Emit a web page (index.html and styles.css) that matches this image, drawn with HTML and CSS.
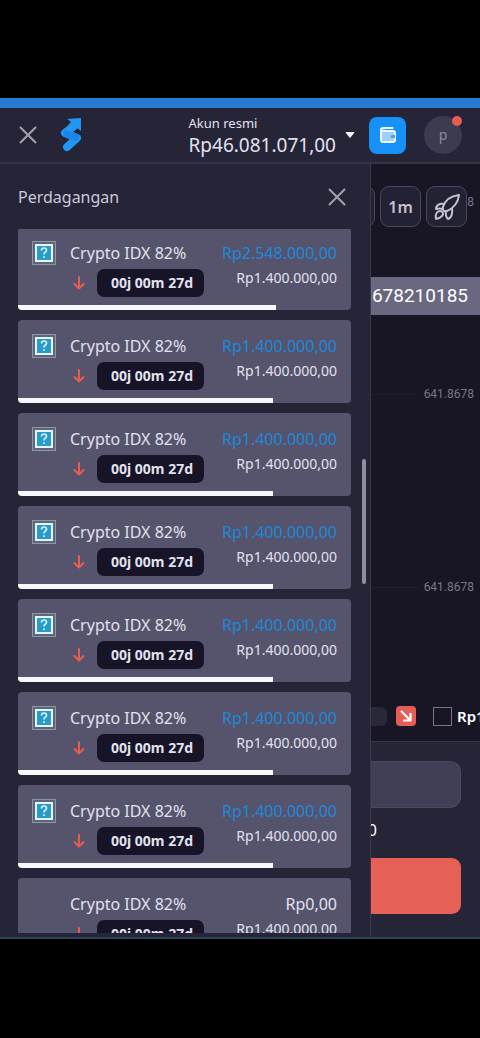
FILE: index.html
```html
<!DOCTYPE html>
<html lang="id">
<head>
<meta charset="utf-8">
<meta name="viewport" content="width=device-width, initial-scale=1">
<title>Perdagangan</title>
<link rel="stylesheet" href="styles.css">
</head>
<body>
<svg class="sprite" aria-hidden="true">
  <symbol id="close" viewBox="0 0 18 18"><path d="M1.500 1.500 16.500 16.500M16.500 1.500 1.500 16.500" fill="none" stroke="currentColor" stroke-width="2" stroke-linecap="round"/></symbol>
  <symbol id="down" viewBox="0 0 12 14"><path d="M6 1v11.500M1.500 8 6 12.500 10.500 8" fill="none" stroke="currentColor" stroke-width="2" stroke-linecap="round" stroke-linejoin="round"/></symbol>
</svg>
<div class="app">
  <header class="header">
    <button class="icon-button" aria-label="Tutup"><svg class="close-icon"><use href="#close"/></svg></button>
    <a class="logo" href="#" aria-label="Beranda">
      <svg viewBox="0 0 22 36">
        <path d="M7 2 21 1v13l-4-3-3 3-6-6 3-3z" fill="#2196f3"/>
        <path d="M14 9 5 16l12 5L7 30" fill="none" stroke="#2196f3" stroke-width="8" stroke-linejoin="round" stroke-linecap="round"/>
        <path d="M3 19 5 13l14 5v5l-4 1z" fill="#1b86e6"/>
      </svg>
    </a>
    <button class="account">
      <span class="account-text"><span class="account-type">Akun resmi</span><span class="account-sum">Rp46.081.071,00</span></span>
      <svg class="caret" viewBox="0 0 10 6"><path d="M1 .5h8L5 5.500z" fill="#f2f2fa" stroke="#f2f2fa" stroke-linejoin="round"/></svg>
    </button>
    <button class="wallet" aria-label="Dompet">
      <svg viewBox="0 0 18 18"><path d="M2 4v10q0 2 2 2h10q2 0 2-2V7q0-2-2-2H4Q2 5 2 3.500T4 2h9.500" fill="#9fd0fb" stroke="#eef7ff" stroke-width="2" stroke-linecap="round" stroke-linejoin="round"/><path d="M16 9h-3a1.500 1.500 0 0 0 0 3h3z" fill="#4aa3f0"/><path d="M3 5h12" stroke="#eef7ff" stroke-width="2"/></svg>
    </button>
    <button class="avatar" aria-label="Profil">p<span class="dot"></span></button>
  </header>
  <div class="content">
    <section class="panel">
      <div class="panel-head"><h1>Perdagangan</h1><button class="icon-button" aria-label="Tutup panel"><svg class="close-icon"><use href="#close"/></svg></button></div>
      <div class="scroll"><ul class="trades" id="trades"></ul></div>
      <div class="thumb"></div>
    </section>
    <main class="side">
      <div class="chart">
        <span class="axis axis-back">641.8678</span>
        <div class="tools">
          <button class="tool" aria-label="Indikator"></button>
          <button class="tool">1m</button>
          <button class="tool" aria-label="Strategi">
            <svg viewBox="0 0 28 28" fill="none" stroke="currentColor" stroke-width="2" stroke-linejoin="round" stroke-linecap="round"><path d="M26 2C18 3 12 7 10 14q-1 5 4 4C21 15 25 10 26 2z"/><path d="M11 11C7 10 3 12 3 16q4-1 7 0M19 16c1 5-1 9-4 10q-3-3-2-8"/><path d="M3 26c-1-5 1-8 4-8s4 3 2 5-3 3-6 3z"/></svg>
          </button>
        </div>
        <div class="price">641.8678210185</div>
        <div class="axis-row first"><span class="axis">641.8678</span></div>
        <div class="axis-row second"><span class="axis">641.8678</span></div>
        <div class="deals">
          <span class="chip"></span>
          <span class="sell"><svg viewBox="0 0 20 20"><path d="M5 5l9 9M14.500 7v7.500H7" fill="none" stroke="#fff" stroke-width="2.200"/></svg></span>
          <label class="deal"><input type="checkbox"><span>Rp1.400.000</span></label>
        </div>
      </div>
      <div class="order">
        <input class="amount" type="text" aria-label="Jumlah">
        <div class="income">Rp2.548.000,00</div>
        <button class="sell-button" aria-label="Turun"></button>
      </div>
    </main>
  </div>
</div>
<script src="app.js"></script>
</body>
</html>
```
FILE: styles.css
```css
* { box-sizing: border-box; }
body {
  margin: 0;
  min-height: 100vh;
  padding: 98px 0 99px;
  display: flex;
  background: #000;
  color: #e2e1ef;
  font: 16px/20px "Noto Sans", "Open Sans", sans-serif;
}
button { border: 0; padding: 0; background: none; color: inherit; font: inherit; }
svg { display: block; }
.sprite { position: absolute; width: 0; height: 0; }
.app {
  flex: 1;
  min-width: 0;
  display: flex;
  flex-direction: column;
  border-top: 10px solid #267ad3;
  border-bottom: 2px solid #28455b;
  background: #262437;
}
.header {
  height: 56px;
  padding: 0 18px;
  display: flex;
  align-items: center;
  border-bottom: 2px solid #343245;
}
.icon-button { width: 20px; height: 20px; display: grid; place-items: center; color: #a3a1b1; }
.close-icon { width: 18px; height: 18px; }
.logo { margin-left: 22px; }
.logo svg { width: 22px; height: 36px; }
.account { margin-left: auto; display: flex; align-items: center; gap: 9px; text-align: left; }
.account-text { display: grid; }
.account-type { font-size: 13px; line-height: 20px; }
.account-sum { font-size: 19px; line-height: 24px; }
.caret { width: 10px; height: 6px; }
.wallet {
  width: 37px;
  height: 37px;
  margin-left: 14px;
  display: grid;
  place-items: center;
  border-radius: 8px;
  background: #1591f7;
}
.wallet svg { width: 18px; height: 18px; }
.avatar {
  position: relative;
  width: 38px;
  height: 38px;
  margin-left: 18px;
  border-radius: 50%;
  background: #3c3b4f;
  color: #8d8b9d;
  font-size: 14px;
}
.dot { position: absolute; top: 0; right: 0; width: 10px; height: 10px; border-radius: 50%; background: #e75d54; }
.content { flex: 1; min-height: 0; display: grid; grid-template-columns: minmax(0, 1fr) 109px; }
.panel { position: relative; display: flex; flex-direction: column; border-right: 1px solid #3a384b; }
.panel-head {
  height: 65px;
  padding: 0 23px 0 18px;
  display: flex;
  align-items: center;
  justify-content: space-between;
}
h1 { margin: 0; font-size: 16px; font-weight: 400; color: #cbc9d9; }
.scroll { flex: 1 1 0; height: 0; margin: 0 19px 4px 18px; overflow: hidden; }
.trades { list-style: none; margin: -2px 0 0; padding: 0; display: grid; gap: 10px; }
.thumb { position: absolute; right: 4px; top: 295px; width: 4px; height: 125px; border-radius: 2px; background: #8e8f9f; }
.trade {
  height: 83px;
  padding: 16px 14px 0;
  display: grid;
  grid-template: 20px 28px 1fr / 24px 14px auto 1fr;
  row-gap: 6px;
  overflow: hidden;
  border-radius: 4px;
  background: #55546c;
}
.asset-icon { width: 24px; height: 24px; margin-top: -2px; }
.asset { grid-column: 3; white-space: nowrap; }
.win { grid-column: 4; text-align: right; color: #1e88d8; }
.win.none { color: inherit; }
.time-row { grid-column: 3; display: flex; align-items: center; gap: 12px; padding-left: 3px; }
.arrow { width: 12px; height: 14px; color: #e75d54; }
.timer {
  width: 107px;
  padding: 4px 9px 4px 14px;
  border-radius: 7px;
  background: #161426;
  font-size: 14px;
  font-weight: 700;
  white-space: nowrap;
}
.stake { grid-column: 4; text-align: right; font-size: 14px; line-height: 18px; }
.progress { grid-row: 3; grid-column: 1 / -1; align-self: end; height: 5px; margin: 0 -14px; }
.bar { height: 100%; background: #f8f8fc; }
.side { min-width: 0; display: flex; flex-direction: column; overflow: hidden; background: #181624; }
.chart { flex: 1; position: relative; overflow: hidden; }
.tools { position: relative; height: 41px; margin: 22px 13px 0 0; display: flex; justify-content: flex-end; gap: 5px; background: #181624; }
.tool {
  flex: 0 0 41px;
  display: grid;
  place-items: center;
  border: 1px solid #49475b;
  border-radius: 9px;
  background: #232134;
  color: #c4c2d1;
  font-weight: 600;
}
.tool svg { width: 28px; height: 28px; }
.axis { color: #77768a; font: 12px/16px Roboto, sans-serif; }
.axis-back { position: absolute; top: 30px; right: 6px; }
.price {
  height: 38px;
  margin-top: 50px;
  padding-right: 12px;
  display: flex;
  align-items: center;
  justify-content: flex-end;
  background: #696880;
  color: #fff;
  font: 19px/38px Roboto, sans-serif;
}
.axis-row { display: flex; align-items: center; gap: 5px; height: 16px; padding-right: 6px; }
.axis-row::before { content: ""; flex: 1; height: 1px; background: #201e2c; }
.first { margin-top: 71px; }
.second { margin-top: 177px; }
.deals { height: 20px; margin-top: 111px; display: flex; align-items: center; font-weight: 600; font-size: 15px; }
.chip { flex: 0 0 16px; height: 19px; border-radius: 0 6px 6px 0; background: #29273a; }
.sell { flex: 0 0 20px; height: 20px; margin: 0 17px 0 9px; border-radius: 4px; background: #e75d54; }
.deal { display: flex; align-items: center; gap: 5px; color: #fff; }
.deal input { appearance: none; flex: 0 0 19px; height: 19px; margin: 0; border: 1px solid #77768a; }
.order {
  height: 196px;
  padding: 19px 19px 0 0;
  display: flex;
  flex-direction: column;
  border-top: 1px solid #343245;
  background: #262437;
}
.amount { width: 100%; height: 47px; border: 1px solid #494a60; border-left: 0; border-radius: 0 11px 11px 0; background: #3f3f56; color: #fff; }
.income { width: 6px; height: 20px; margin: 12px 0 18px; align-self: flex-start; display: flex; justify-content: flex-end; overflow: hidden; color: #fff; }
.sell-button { height: 56px; border-radius: 0 9px 9px 0; background: #e66055; }
```
FILE: app.js
```js
const trades = [
  { win: "Rp2.548.000,00", progress: 77.5, icon: true },
  ...Array.from({ length: 6 }, () => ({ win: "Rp1.400.000,00", progress: 76.7, icon: true })),
  { win: "Rp0,00", progress: 76.7, icon: false }
];

const assetIcon = `<svg class="asset-icon" viewBox="0 0 24 24">
  <rect x=".5" y=".5" width="23" height="23" fill="#626579" stroke="#8798a9"/>
  <rect x="4" y="4" width="16" height="16" fill="#299bc9" stroke="#e5f5fc" stroke-width="2"/>
  <path d="M9.500 9.500q0-2.500 2.500-2.500t2.500 2.200q0 1.300-1.300 2.100T12 13.500M12 15.300v1.700" fill="none" stroke="#d7f2fc" stroke-width="1.700"/>
</svg>`;

document.getElementById("trades").innerHTML = trades.map(t => `
  <li class="trade">
    ${t.icon ? assetIcon : ""}
    <span class="asset">Crypto IDX 82%</span>
    <span class="win${t.icon ? "" : " none"}">${t.win}</span>
    <div class="time-row"><svg class="arrow"><use href="#down"/></svg><span class="timer">00j 00m 27d</span></div>
    <span class="stake">Rp1.400.000,00</span>
    <div class="progress"><div class="bar" style="width:${t.progress}%"></div></div>
  </li>`).join("");
```
